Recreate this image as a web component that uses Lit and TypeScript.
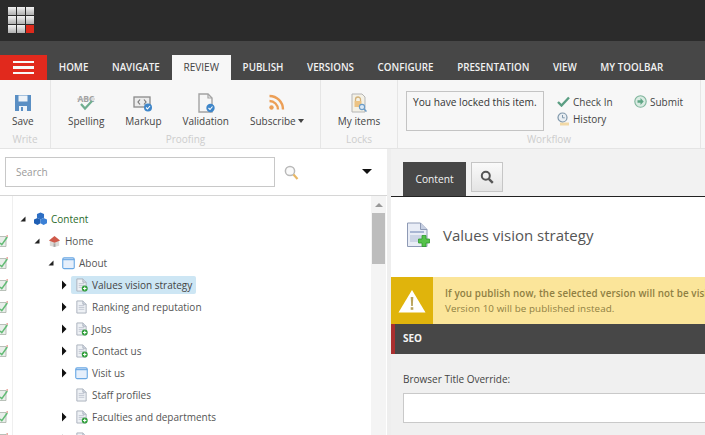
import { LitElement, html, css, svg } from "lit";
import { customElement } from "lit/decorators.js";

const pageIcon = (kind: string) => svg`
  <svg class="ti" viewBox="0 0 14 14" width="13" height="14">
    <path d="M2 .5h6.500L12 4v9.500H2z" fill="#eef1f5" stroke="#a9b0bb"/>
    <path d="M8.500 .5V4H12" fill="#d8deea" stroke="#a9b0bb"/>
    <path d="M4 5.500h6M4 7.500h6M4 9.500h6" stroke="#c0c6d2"/>
    ${kind === "plus" ? svg`<circle cx="10.500" cy="10.800" r="3.200" fill="#2f9e3a"/><path d="M10.500 9v3.600M8.700 10.800h3.600" stroke="#fff" stroke-width="1.100"/>` : ""}
  </svg>`;

const windowIcon = svg`
  <svg class="ti" viewBox="0 0 14 14" width="13" height="14">
    <rect x=".8" y="1.500" width="12.400" height="11.500" rx="1.500" fill="#e6effb" stroke="#6aa8e4" stroke-width="1.200"/>
    <path d="M.8 3.400h12.400" stroke="#6aa8e4" stroke-width="1.200"/>
  </svg>`;

const homeIcon = svg`
  <svg class="ti" viewBox="0 0 14 14" width="13" height="14">
    <path d="M2 6.500v5.600l5 1.400 5-1.400V6.500z" fill="#dcd9d5"/>
    <path d="M1 6.500 7 1.500l6 5-6 2.400z" fill="#cf5a4a"/>
    <path d="M6 9.500h2v3.800H6z" fill="#a5a5a5"/>
  </svg>`;

const cubesIcon = svg`
  <svg class="ti" viewBox="0 0 14 14" width="13" height="14">
    <path d="M7 0 10.800 1.700V5.700L7 7.500 3.200 5.700V1.700z" fill="#2e6fc4"/>
    <path d="M3.700 6 7 7.500V11.700L3.700 13.500 0 11.700V7.500z" fill="#1f5fb4"/>
    <path d="M10.300 6 14 7.500V11.700L10.300 13.500 7 11.700V7.500z" fill="#3b80d6"/>
  </svg>`;

const arrowIcon = (open: boolean) =>
  open
    ? svg`<svg class="arr" viewBox="0 0 8 8" width="8" height="8"><path d="M6.500 1.500v5h-5z" fill="#222"/></svg>`
    : svg`<svg class="arr" viewBox="0 0 8 10" width="8" height="10"><path d="M2 .5 6.500 5 2 9.500z" fill="#111"/></svg>`;

const gutterIcon = svg`
  <svg viewBox="0 0 9 12" width="9" height="12">
    <path d="M0 1.500h7v10H0z" fill="#e9eeea" stroke="#aab2aa" stroke-width=".8"/>
    <path d="M1 8 2.800 9.600 8.300 2" fill="none" stroke="#63bb75" stroke-width="1.500"/>
    <path d="M7.200 .8 8.800 .2 8.400 2z" fill="#d14a3a"/>
  </svg>`;

type Row = { level: number; label: string; icon: any; arrow?: "open" | "closed"; sel?: boolean; green?: boolean; check: boolean };

const indents = [4, 18, 32, 45];

const rows: Row[] = [
  { level: 0, label: "Content", icon: cubesIcon, arrow: "open", green: true, check: false },
  { level: 1, label: "Home", icon: homeIcon, arrow: "open", check: true },
  { level: 2, label: "About", icon: windowIcon, arrow: "open", check: true },
  { level: 3, label: "Values vision strategy", icon: pageIcon("plus"), arrow: "closed", sel: true, check: true },
  { level: 3, label: "Ranking and reputation", icon: pageIcon("plain"), arrow: "closed", check: true },
  { level: 3, label: "Jobs", icon: pageIcon("plus"), arrow: "closed", check: true },
  { level: 3, label: "Contact us", icon: pageIcon("plus"), arrow: "closed", check: true },
  { level: 3, label: "Visit us", icon: windowIcon, arrow: "closed", check: false },
  { level: 3, label: "Staff profiles", icon: pageIcon("plain"), check: true },
  { level: 3, label: "Faculties and departments", icon: pageIcon("plus"), arrow: "closed", check: true },
  { level: 3, label: "", icon: pageIcon("plain"), arrow: "closed", check: true },
];

const tabs = ["HOME", "NAVIGATE", "REVIEW", "PUBLISH", "VERSIONS", "CONFIGURE", "PRESENTATION", "VIEW", "MY TOOLBAR"];

const saveIcon = svg`<svg viewBox="0 0 18 18" width="18" height="18">
  <path d="M1 1h16v16H1z" fill="#5a8fc4"/><path d="M4.500 1.500h9v6h-9z" fill="#eef3f8"/>
  <path d="M5 12h8v5H5z" fill="#eef3f8"/><path d="M7 13h2v4H7z" fill="#5a8fc4"/></svg>`;
const spellIcon = svg`<svg viewBox="0 0 20 18" width="20" height="18">
  <text x="10" y="8" text-anchor="middle" font-family="Open Sans" font-size="8.500" font-weight="700" fill="#a0a0a0">ABC</text>
  <path d="M1 5h18" stroke="#b5b5b5" stroke-width=".8"/>
  <path d="M5 10l4 4.500L16 7" fill="none" stroke="#6fae8f" stroke-width="2.200"/></svg>`;
const markupIcon = svg`<svg viewBox="0 0 20 18" width="20" height="18">
  <rect x="1" y="3" width="16" height="10" fill="#ececec" stroke="#8b8b8b" stroke-width="1.300"/>
  <path d="M7 5.500 5 8l2 2.500M11 5.500 13 8l-2 2.500" fill="none" stroke="#777" stroke-width="1.200"/>
  <circle cx="15" cy="13.500" r="4" fill="#3f86c9"/><path d="M13 13.500l1.500 1.500 2.500-3" fill="none" stroke="#fff" stroke-width="1.100"/></svg>`;
const validIcon = svg`<svg viewBox="0 0 18 20" width="18" height="20">
  <path d="M2 1h9l4 4v14H2z" fill="#f6f6f6" stroke="#a3a3a3" stroke-width="1.400"/>
  <path d="M11 1v4h4" fill="none" stroke="#a3a3a3" stroke-width="1.200"/>
  <circle cx="13.500" cy="15" r="4.200" fill="#3f86c9"/><path d="M11.500 15l1.500 1.500 2.500-3" fill="none" stroke="#fff" stroke-width="1.100"/></svg>`;
const rssIcon = svg`<svg viewBox="0 0 17 17" width="17" height="17">
  <circle cx="3.500" cy="13.500" r="2.200" fill="#ec9f57"/>
  <path d="M1.500 7a8.500 8.500 0 0 1 8.500 8.500" fill="none" stroke="#ec9f57" stroke-width="2.400"/>
  <path d="M1.500 2a13.500 13.500 0 0 1 13.500 13.500" fill="none" stroke="#ec9f57" stroke-width="2.400"/></svg>`;
const myItemsIcon = svg`<svg viewBox="0 0 18 20" width="18" height="20">
  <path d="M2 1h10l3 3v15H2z" fill="#f4f1e6" stroke="#b5b5b5" />
  <path d="M5.500 8V6.500a2.500 2.500 0 0 1 5 0V8" fill="none" stroke="#d3b27a" stroke-width="1.300"/>
  <rect x="4.500" y="8" width="7" height="6" fill="#ecc384"/>
  <circle cx="12" cy="14" r="2.600" fill="#dbe9f5" stroke="#6b9cc8" stroke-width="1.100"/>
  <path d="M14 16l2.500 2.500" stroke="#6b9cc8" stroke-width="1.400"/></svg>`;
const checkIcon = svg`<svg viewBox="0 0 13 11" width="13" height="11"><path d="M1 6l3.500 3.500L12 1.500" fill="none" stroke="#5b9e83" stroke-width="2.400"/></svg>`;
const historyIcon = svg`<svg viewBox="0 0 13 14" width="13" height="14">
  <path d="M3 10.500h9v3H3z" fill="#f2d9a6"/>
  <circle cx="5.500" cy="5.500" r="4.500" fill="#e9eef2" stroke="#7f97ab" stroke-width="1.200"/>
  <path d="M5.500 3v2.800h2.200" fill="none" stroke="#7f97ab"/></svg>`;
const submitIcon = svg`<svg viewBox="0 0 13 13" width="13" height="13">
  <circle cx="6.500" cy="6.500" r="5.700" fill="#d9ebe2" stroke="#7fb59c" stroke-width="1.100"/>
  <path d="M3.500 5.300h3V3l3.200 3.500L6.500 10V7.700h-3z" fill="#5fa585"/></svg>`;
const lensIcon = svg`<svg viewBox="0 0 15 16" width="15" height="16">
  <circle cx="6" cy="6" r="4.600" fill="#fafafa" stroke="#b9b9b9" stroke-width="1.500"/>
  <path d="M9.500 9.500l4 4.500" stroke="#e8b765" stroke-width="2.200"/></svg>`;
const darkLens = svg`<svg viewBox="0 0 14 14" width="14" height="14">
  <circle cx="5.800" cy="5.800" r="4" fill="none" stroke="#555" stroke-width="2"/>
  <path d="M8.800 8.800l4 4" stroke="#555" stroke-width="2.400"/></svg>`;
const bigPage = svg`<svg viewBox="0 0 24 26" width="24" height="26">
  <path d="M1.500 1h13L21 7.500V24.500H1.500z" fill="#e9edf6" stroke="#8e9ab5"/>
  <path d="M14.500 1v6.500H21" fill="#c6cfe2" stroke="#8e9ab5"/>
  <path d="M4 9h14v2H4z" fill="#a9b6d3"/><path d="M4 13h14v7H4z" fill="#cdd5e6"/>
  <path d="M16 13.500h4v3.500h3.500v4H20v3.500h-4V21h-3.500v-4H16z" fill="#55c24a" stroke="#2f9a2f" stroke-width=".8"/></svg>`;
const warnIcon = svg`<svg viewBox="0 0 28 24" width="28" height="24">
  <path d="M14 1 27.500 23.500H.5z" fill="#fff"/>
  <path d="M12.700 8h2.600l-.5 9h-1.600z" fill="#b9a35c"/><rect x="12.700" y="18.200" width="2.600" height="2.600" fill="#b9a35c"/></svg>`;

@customElement("app-root")
export class AppRoot extends LitElement {
  static styles = css`
    :host { display: block; width: 705px; height: 435px; overflow: hidden; font-family: "Open Sans", sans-serif; color: #444; background: #fff; }
    .top { height: 41px; background: #2b2b2b; padding: 7px 0 0 8px; box-sizing: border-box; }
    .logo { display: grid; grid-template-columns: repeat(3, 8px); grid-auto-rows: 8px; gap: 1px; }
    .logo i { background: linear-gradient(#f2f2f2, #b0b0b0); }
    .logo i.red { background: #de2a1c; }
    .nav { height: 39px; background: #474747; display: flex; align-items: flex-end; box-sizing: border-box; }
    .burger { width: 47px; height: 25px; background: #e1291d; display: flex; flex-direction: column; justify-content: center; align-items: center; gap: 3px; flex: none; }
    .burger i { width: 21px; height: 2.500px; background: #f8f8f8; }
    .tab { height: 25px; line-height: 25px; padding: 0 11.800px; font-size: 9.800px; font-weight: 600; color: #f2f2f2; white-space: nowrap; flex: none; }
    .tab.on { background: #f7f7f7; color: #444; font-weight: 400; font-size: 10.100px; }
    .ribbon { height: 69px; background: #f7f7f7; border-bottom: 1px solid #e4e4e4; box-sizing: border-box; display: flex; }
    .chunk { border-right: 1px solid #e6e6e6; display: flex; flex-direction: column; box-sizing: border-box; }
    .cbody { flex: 1; display: flex; gap: 21px; min-height: 0; }
    .clabel { height: 14px; line-height: 14px; text-align: center; font-size: 10px; color: #cdcdcd; padding-bottom: 2px; }
    .btn { display: flex; flex-direction: column; align-items: center; padding-top: 11px; font-size: 10px; color: #444; white-space: nowrap; }
    .btn .ic { height: 23px; display: flex; align-items: center; justify-content: center; }
    .btn .t { line-height: 14px; }
    .write { width: 51px; }
    .write .cbody { padding-left: 12px; }
    .proof { width: 270px; }
    .proof .cbody { padding-left: 17px; }
    .locks { width: 77px; }
    .locks .cbody { justify-content: center; }
    .flow { width: 303px; }
    .flow .cbody { padding: 11px 0 0 8px; gap: 0; }
    .locked { width: 138px; height: 40px; box-sizing: border-box; border: 1px solid #c4c4c4; padding: 3px 6px; font-size: 10.200px; line-height: 14px; color: #333; white-space: nowrap; }
    .acts { display: grid; grid-template-columns: 77px auto; grid-auto-rows: 17px; padding: 2px 0 0 13px; font-size: 10px; }
    .act { display: flex; align-items: center; gap: 3px; white-space: nowrap; }
    .act svg { flex: none; }
    .car { display: inline-block; width: 0; height: 0; border: 3px solid transparent; border-top: 4px solid #444; border-bottom: 0; margin-left: 2px; vertical-align: 2px; }
    .main { display: flex; height: 286px; }
    .left { width: 391px; box-sizing: border-box; border-right: 4px solid #eee; flex: none; display: flex; flex-direction: column; background: #fff; }
    .search { height: 47px; border-bottom: 1px solid #d6d6d6; display: flex; align-items: flex-start; padding: 8px 0 0 5px; box-sizing: border-box; flex: none; }
    .sinput { width: 270px; height: 30px; box-sizing: border-box; border: 1px solid #c8c8c8; line-height: 28px; padding-left: 10px; font-size: 10px; color: #9a9a9a; }
    .lens { margin: 7px 0 0 9px; }
    .dd { width: 0; height: 0; border: 5px solid transparent; border-top: 5px solid #111; border-bottom: 0; margin: 12px 0 0 63px; }
    .treewrap { flex: 1; display: flex; min-height: 0; }
    .gutter { width: 12px; border-right: 1px solid #efefef; padding-top: 34px; flex: none; overflow: hidden; }
    .gcell { height: 22px; display: flex; align-items: center; margin-left: -1px; }
    .tree { flex: 1; padding-top: 12px; overflow: hidden; }
    .row { height: 22px; display: flex; align-items: center; }
    .row .tg { width: 12px; display: flex; justify-content: center; flex: none; }
    .cell { display: flex; align-items: center; gap: 4px; height: 18px; padding: 0 4px 0 4px; font-size: 10px; color: #555; white-space: nowrap; margin-left: 1px; }
    .cell.sel { background: #cde6f4; border-radius: 2px; color: #444; }
    .cell.green { color: #2b6b2b; }
    .ti { flex: none; }
    .sb { width: 15px; margin-right: 1px; background: #f4f4f4; flex: none; display: flex; flex-direction: column; align-items: center; }
    .up { width: 0; height: 0; border: 4px solid transparent; border-bottom: 4px solid #999; border-top: 0; margin: 7px 0 6px; }
    .thumb { width: 13px; height: 51px; background: #bdbdbd; }
    .right { flex: 1; min-width: 0; display: flex; flex-direction: column; background: #fff; }
    .rtabs { height: 48px; background: #f2f2f2; border-bottom: 1px solid #222; box-sizing: border-box; display: flex; gap: 5px; padding: 13px 0 0 12px; flex: none; align-items: flex-start; }
    .ctab { width: 63px; height: 34px; background: #474747; color: #f4f4f4; font-size: 10.200px; display: flex; align-items: center; justify-content: center; }
    .stab { width: 32px; height: 30px; box-sizing: border-box; border: 1px solid #c6c6c6; background: linear-gradient(#fafafa, #e4e4e4); display: flex; align-items: center; justify-content: center; }
    .head { height: 80px; flex: none; display: flex; align-items: center; padding: 0 0 4px 15px; gap: 13px; font-size: 15px; color: #555; white-space: nowrap; box-sizing: border-box; }
    .warn { height: 47px; flex: none; display: flex; background: #fbe59a; }
    .wi { width: 42px; background: #e0b40c; display: flex; align-items: center; justify-content: center; flex: none; }
    .wt { padding: 10px 0 0 12px; font-size: 9.800px; line-height: 14.500px; color: #8f7f42; white-space: nowrap; overflow: hidden; font-weight: 600; letter-spacing: .1px; }
    .wt span { display: block; font-weight: 500; letter-spacing: .09px; }
    .seo { height: 30px; flex: none; background: #474747; border-left: 4px solid #a92f2f; box-sizing: border-box; padding-left: 8px; line-height: 29px; font-size: 10px; font-weight: 700; color: #f4f4f4; }
    .form { flex: 1; background: #f0f0f0; padding: 18px 0 0 12px; font-size: 10px; color: #444; }
    .flabel { line-height: 14px; margin-bottom: 7px; }
    .finput { height: 30px; box-sizing: border-box; background: #fff; border: 1px solid #c9c9c9; border-right: 0; }
  `;

  render() {
    return html`
      <div class="top"><div class="logo">${[0,1,2,3,4,5,6,7].map(() => html`<i></i>`)}<i class="red"></i></div></div>
      <div class="nav">
        <div class="burger"><i></i><i></i><i></i></div>
        ${tabs.map((t) => html`<div class="tab ${t === "REVIEW" ? "on" : ""}">${t}</div>`)}
      </div>
      <div class="ribbon">
        <div class="chunk write">
          <div class="cbody"><div class="btn"><div class="ic">${saveIcon}</div><div class="t">Save</div></div></div>
          <div class="clabel">Write</div>
        </div>
        <div class="chunk proof">
          <div class="cbody">
            <div class="btn"><div class="ic">${spellIcon}</div><div class="t">Spelling</div></div>
            <div class="btn"><div class="ic">${markupIcon}</div><div class="t">Markup</div></div>
            <div class="btn"><div class="ic">${validIcon}</div><div class="t">Validation</div></div>
            <div class="btn"><div class="ic">${rssIcon}</div><div class="t">Subscribe<span class="car"></span></div></div>
          </div>
          <div class="clabel">Proofing</div>
        </div>
        <div class="chunk locks">
          <div class="cbody"><div class="btn"><div class="ic">${myItemsIcon}</div><div class="t">My items</div></div></div>
          <div class="clabel">Locks</div>
        </div>
        <div class="chunk flow">
          <div class="cbody">
            <div class="locked">You have locked this item.</div>
            <div class="acts">
              <div class="act">${checkIcon}<span>Check In</span></div>
              <div class="act">${submitIcon}<span>Submit</span></div>
              <div class="act">${historyIcon}<span>History</span></div>
            </div>
          </div>
          <div class="clabel">Workflow</div>
        </div>
      </div>
      <div class="main">
        <div class="left">
          <div class="search">
            <div class="sinput">Search</div>
            <div class="lens">${lensIcon}</div>
            <div class="dd"></div>
          </div>
          <div class="treewrap">
            <div class="gutter">${rows.slice(1).map((r) => html`<div class="gcell">${r.check ? gutterIcon : ""}</div>`)}</div>
            <div class="tree">
              ${rows.map((r) => html`
                <div class="row" style="padding-left:${indents[r.level]}px">
                  <div class="tg">${r.arrow ? arrowIcon(r.arrow === "open") : ""}</div>
                  <div class="cell ${r.sel ? "sel" : ""} ${r.green ? "green" : ""}">${r.icon}<span>${r.label}</span></div>
                </div>`)}
            </div>
            <div class="sb"><div class="up"></div><div class="thumb"></div></div>
          </div>
        </div>
        <div class="right">
          <div class="rtabs">
            <div class="ctab">Content</div>
            <div class="stab">${darkLens}</div>
          </div>
          <div class="head">${bigPage}<span>Values vision strategy</span></div>
          <div class="warn">
            <div class="wi">${warnIcon}</div>
            <div class="wt">If you publish now, the selected version will not be visible on the web site.<span>Version 10 will be published instead.</span></div>
          </div>
          <div class="seo">SEO</div>
          <div class="form">
            <div class="flabel">Browser Title Override:</div>
            <div class="finput"></div>
          </div>
        </div>
      </div>
    `;
  }
}
